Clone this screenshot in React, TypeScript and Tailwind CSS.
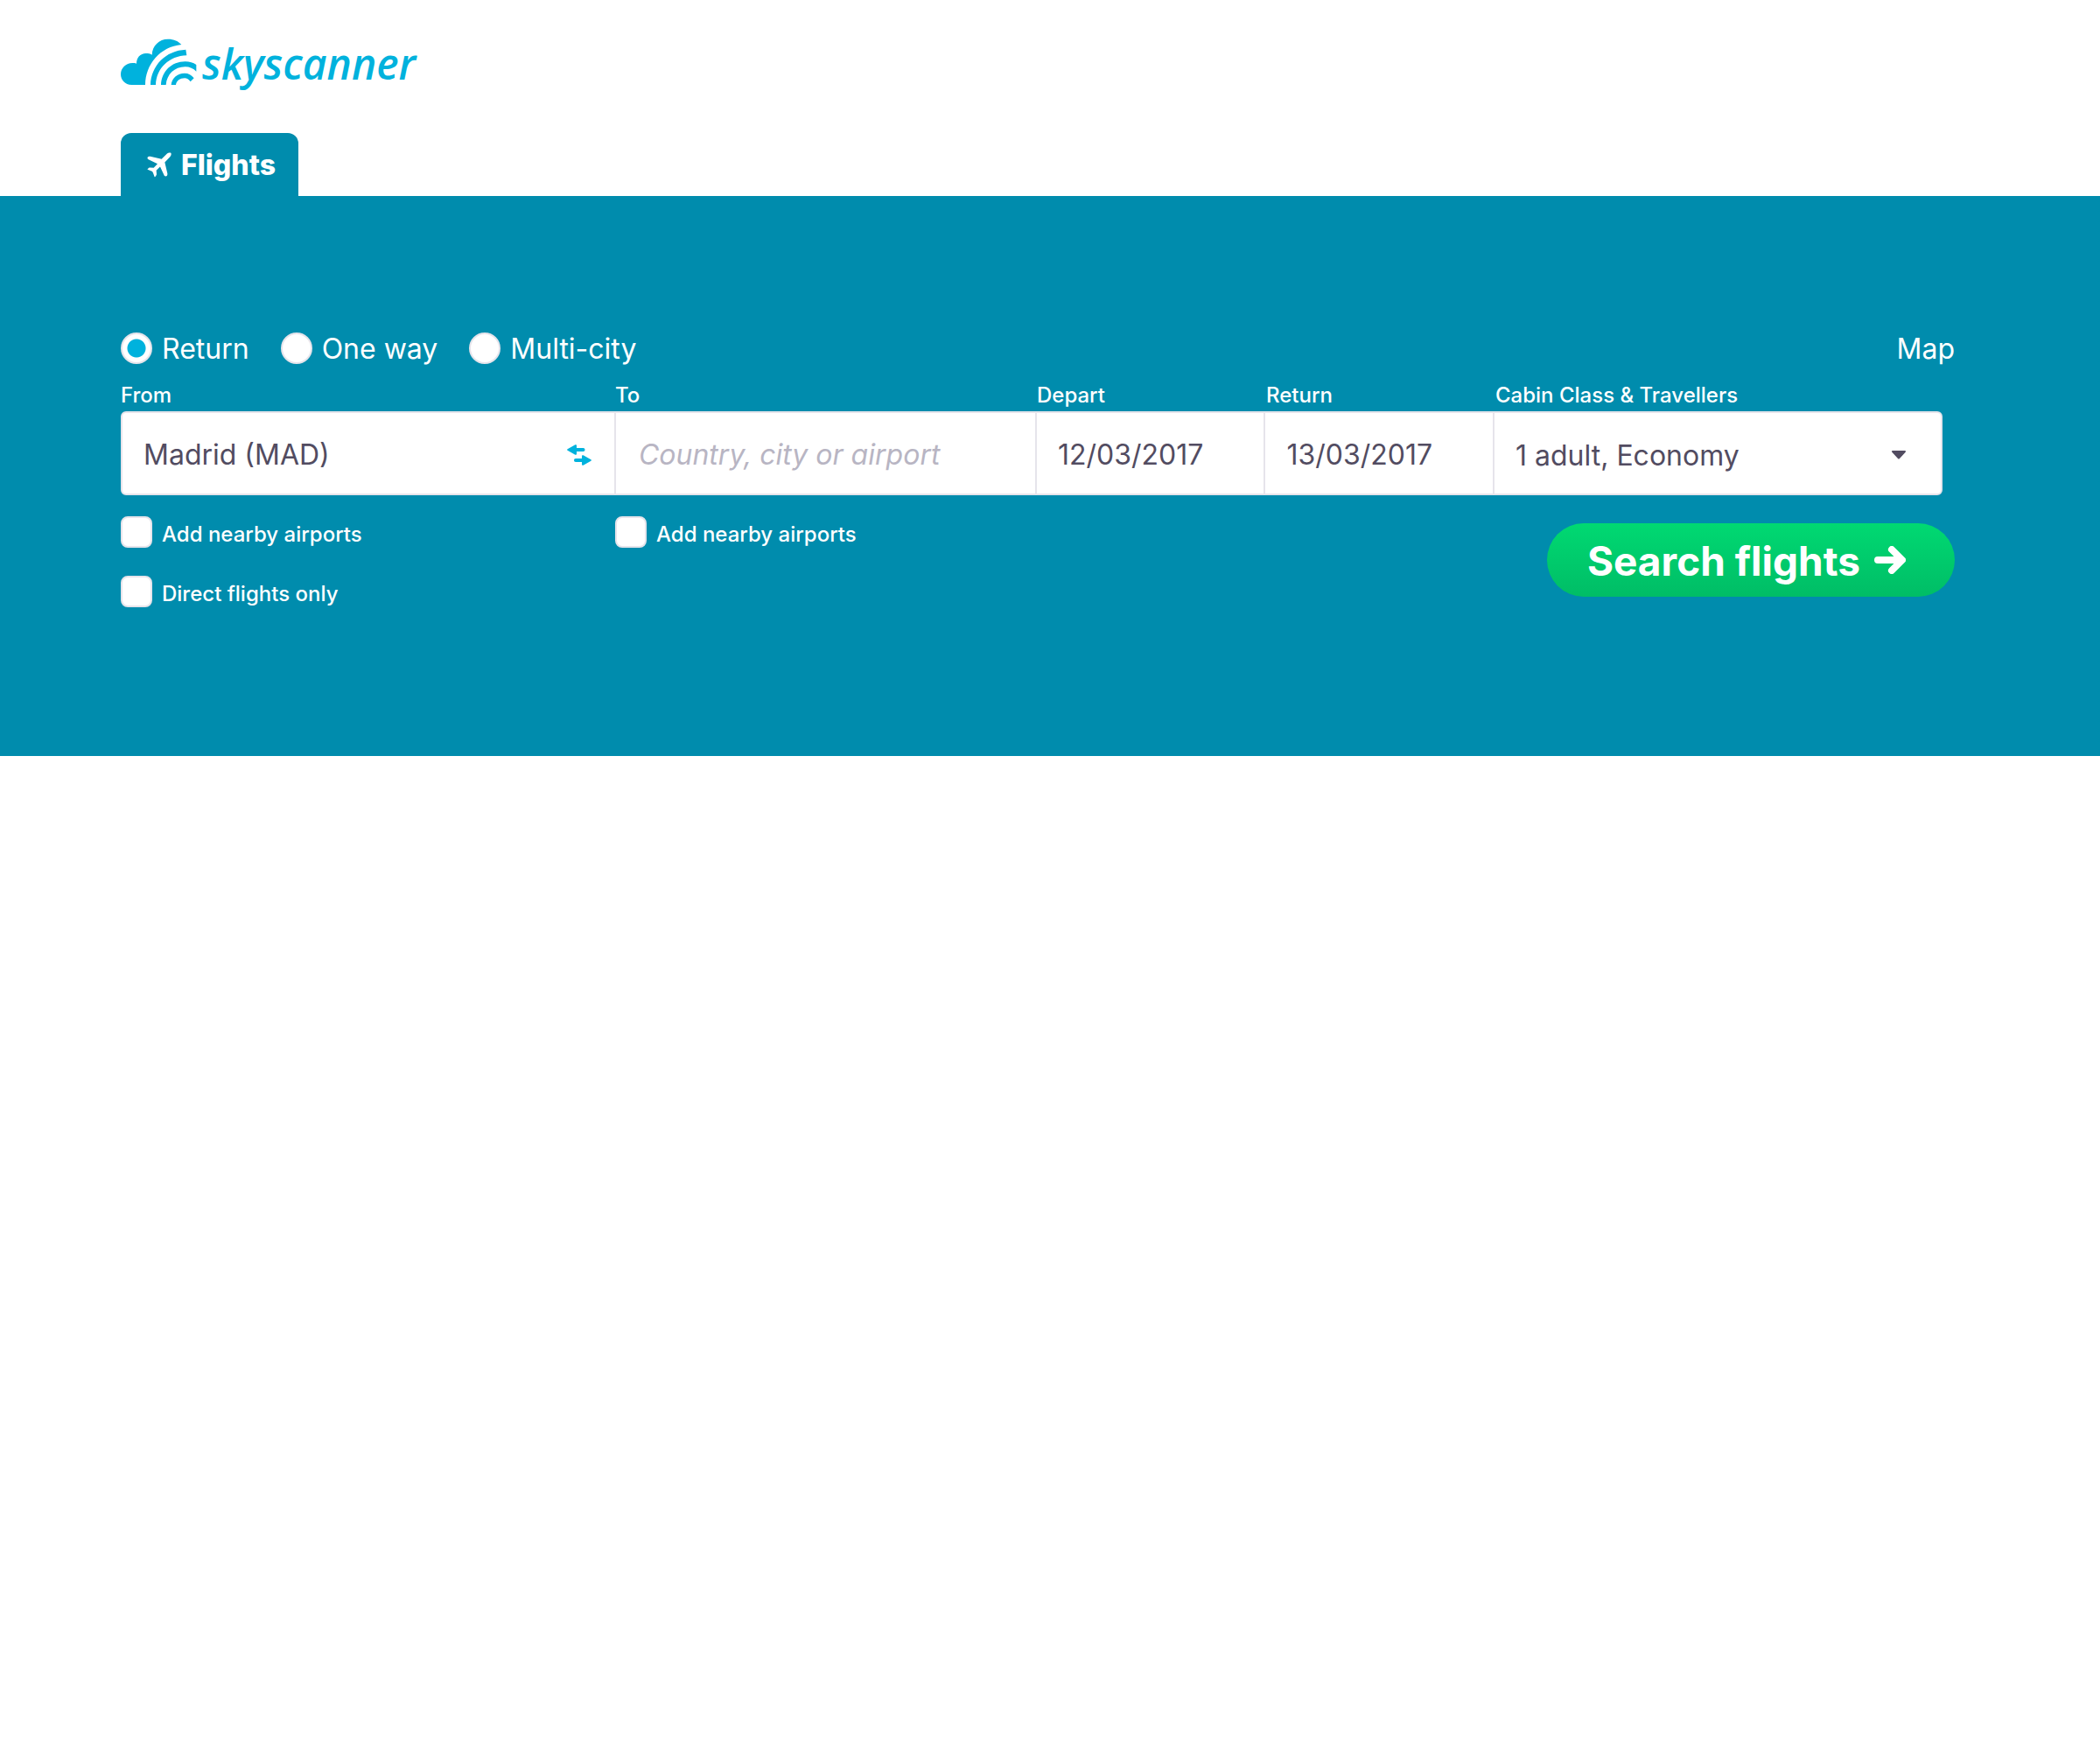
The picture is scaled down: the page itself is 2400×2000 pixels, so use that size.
import { useState } from "react";

const trips = ["Return", "One way", "Multi-city"];

function CloudLogo() {
  return (
    <svg viewBox="24 24 261 162" className="h-[54px] w-[87px] shrink-0" fill="#00b2dd" aria-hidden="true">
      <path d="M61 183C39 183 24 166 24 147C24 125 42 108 64 108C69 108 73 108 78 110C78 90 91 75 110 75C118 75 125 76 131 80C132 49 155 26 186 26C206 26 222 33 232 45C160 52 108 112 108 183Z" />
      <path d="M126 183C128 117 178 65 247 62L250 82C190 84 146 126 144 183Z" />
      <path d="M162 183C164 137 198 103 245 103C260 103 272 107 283 114V137C273 127 260 121 245 121C208 121 182 147 179 183Z" />
      <path d="M197 183C199 160 218 143 243 143C256 143 267 149 275 160L263 172C257 164 251 160 243 160C227 160 215 169 213 183Z" />
    </svg>
  );
}

function PlaneIcon() {
  return (
    <svg viewBox="145 101 84 86" className="h-[29px] w-7" fill="white" aria-hidden="true">
      <path d="M214 105C218 101 224 101 227 103C229 107 228 112 224 116L206 135L215 173C216 179 213 183 209 183C206 183 204 181 203 178L190 150L177 163L178 176C178 178 173 186 171 185L166 172C165 168 163 166 160 165L147 160C145 159 152 153 154 153L168 154L181 140L150 125C147 124 146 121 147 118C149 115 152 114 156 115L195 124Z" />
    </svg>
  );
}

function SwapIcon() {
  return (
    <svg viewBox="0 0 28 24" className="mt-1 h-6 w-7" fill="#00b2dd" aria-hidden="true">
      <path d="M.6 5.2 9.4.3C10.2-.1 11 .4 11 1.2V3.900H18.500A2 2 0 0 1 18.500 8H11V10.800C11 11.600 10.200 12.100 9.400 11.700L.6 6.800C0 6.400 0 5.600.6 5.200Z" />
      <path d="M27.400 17.200 18.600 12.300C17.800 11.900 17 12.400 17 13.200V15.900H10A2 2 0 0 0 10 20H17V22.800C17 23.600 17.800 24.100 18.600 23.700L27.400 18.800C28 18.400 28 17.600 27.400 17.200Z" />
    </svg>
  );
}

function Tick({ label }: { label: string }) {
  return (
    <label className="flex w-fit cursor-pointer items-center gap-[11px] self-start">
      <input
        type="checkbox"
        className="size-9 shrink-0 appearance-none rounded-lg border-2 border-[#e6e4eb] bg-white checked:bg-[#00b2dd]"
      />
      <span className="pt-1.5 text-2xl leading-[30px] font-medium">{label}</span>
    </label>
  );
}

const columns = "grid grid-cols-[565fr_482fr_262fr_262fr_511fr]";
const caption = "pt-0.5 text-2xl leading-9 font-medium";
const field = "h-full w-full min-w-0 bg-transparent pt-0.5 text-[32px] text-[#524c61] outline-none";

export default function App() {
  const [trip, setTrip] = useState("Return");
  return (
    <div className="min-h-screen bg-white font-['Inter',sans-serif]">
      <header className="pt-11 pr-[166px] pl-[138px]">
        <a href="#" aria-label="skyscanner" className="flex h-[54px] w-fit items-center gap-1.5 text-[#00b2dd]">
          <CloudLogo />
          <span className="pt-1 font-['Open_Sans',sans-serif] text-5xl leading-[54px] font-semibold italic">skyscanner</span>
        </a>
        <nav className="mt-[54px] flex">
          <a
            href="#"
            className="flex h-[72px] items-center gap-[11px] rounded-t-xl bg-[#008cad] pr-[26px] pl-[30px] text-[32px] font-extrabold text-white"
          >
            <PlaneIcon />
            <span className="pt-0.5">Flights</span>
          </a>
        </nav>
      </header>

      <main className="bg-[#008cad] pt-[156px] pr-[166px] pb-[170px] pl-[138px] text-white">
        <form onSubmit={(e) => e.preventDefault()}>
          <div className="flex h-9 items-center justify-between text-[32px]">
            <div className="flex items-center gap-9">
              {trips.map((name) => (
                <label key={name} className="flex cursor-pointer items-center gap-[11px]">
                  <input
                    type="radio"
                    name="trip"
                    checked={trip === name}
                    onChange={() => setTrip(name)}
                    className="size-9 shrink-0 appearance-none rounded-full border-2 border-[#e6e4eb] bg-white checked:bg-[radial-gradient(circle,#00b2dd_0_10px,#fff_11px)]"
                  />
                  <span className="pt-0.5">{name}</span>
                </label>
              ))}
            </div>
            <a href="#" className="pt-0.5">Map</a>
          </div>

          <div className="mt-4 mr-3.5">
            <div className={columns}>
              <label htmlFor="from" className={caption}>From</label>
              <label htmlFor="to" className={caption}>To</label>
              <label htmlFor="depart" className={caption}>Depart</label>
              <label htmlFor="return" className={caption}>Return</label>
              <label htmlFor="cabin" className={caption}>Cabin Class &amp; Travellers</label>
            </div>
            <div className="h-24 overflow-hidden rounded-md border-2 border-[#e6e4eb] bg-white">
              <div className={`${columns} h-full divide-x-2 divide-[#e6e4eb]`}>
                <div className="flex items-center pr-[26px]">
                  <input id="from" defaultValue="Madrid (MAD)" className={`${field} px-6`} />
                  <button type="button" aria-label="Swap origin and destination">
                    <SwapIcon />
                  </button>
                </div>
                <div>
                  <input
                    id="to"
                    placeholder="Country, city or airport"
                    className={`${field} px-[26px] placeholder:text-[#b8b5c3] placeholder:italic`}
                  />
                </div>
                <div>
                  <input id="depart" defaultValue="12/03/2017" className={`${field} px-6`} />
                </div>
                <div>
                  <input id="return" defaultValue="13/03/2017" className={`${field} px-6`} />
                </div>
                <div className="relative">
                  <select id="cabin" className={`${field} appearance-none px-6 pt-1.5`}>
                    <option>1 adult, Economy</option>
                  </select>
                  <svg
                    viewBox="0 0 16 10"
                    className="pointer-events-none absolute top-[43px] right-10 h-2.5 w-4"
                    fill="#524c61"
                    aria-hidden="true"
                  >
                    <path d="M1 0H15C16 0 16.300 1 15.700 1.700L9 9C8.400 9.700 7.600 9.700 7 9L.3 1.700C-.3 1 0 0 1 0Z" />
                  </svg>
                </div>
              </div>
            </div>
          </div>

          <div className={`${columns} mr-3.5 pt-6`}>
            <div className="flex flex-col gap-8">
              <Tick label="Add nearby airports" />
              <Tick label="Direct flights only" />
            </div>
            <Tick label="Add nearby airports" />
            <div className="col-span-3 -mr-3.5 flex justify-end pt-2">
              <button
                type="submit"
                className="flex h-[84px] items-center gap-4 rounded-full bg-linear-to-b from-[#00d972] to-[#00bd66] pr-14 pl-[46px] text-[46px] font-bold whitespace-nowrap"
              >
                <span className="pt-0.5">Search flights</span>
                <svg
                  viewBox="0 0 36 32"
                  className="h-8 w-9"
                  fill="none"
                  stroke="white"
                  strokeWidth="8"
                  strokeLinecap="round"
                  strokeLinejoin="round"
                  aria-hidden="true"
                >
                  <path d="M4 16H30M20 4 32 16 20 28" />
                </svg>
              </button>
            </div>
          </div>
        </form>
      </main>
    </div>
  );
}
